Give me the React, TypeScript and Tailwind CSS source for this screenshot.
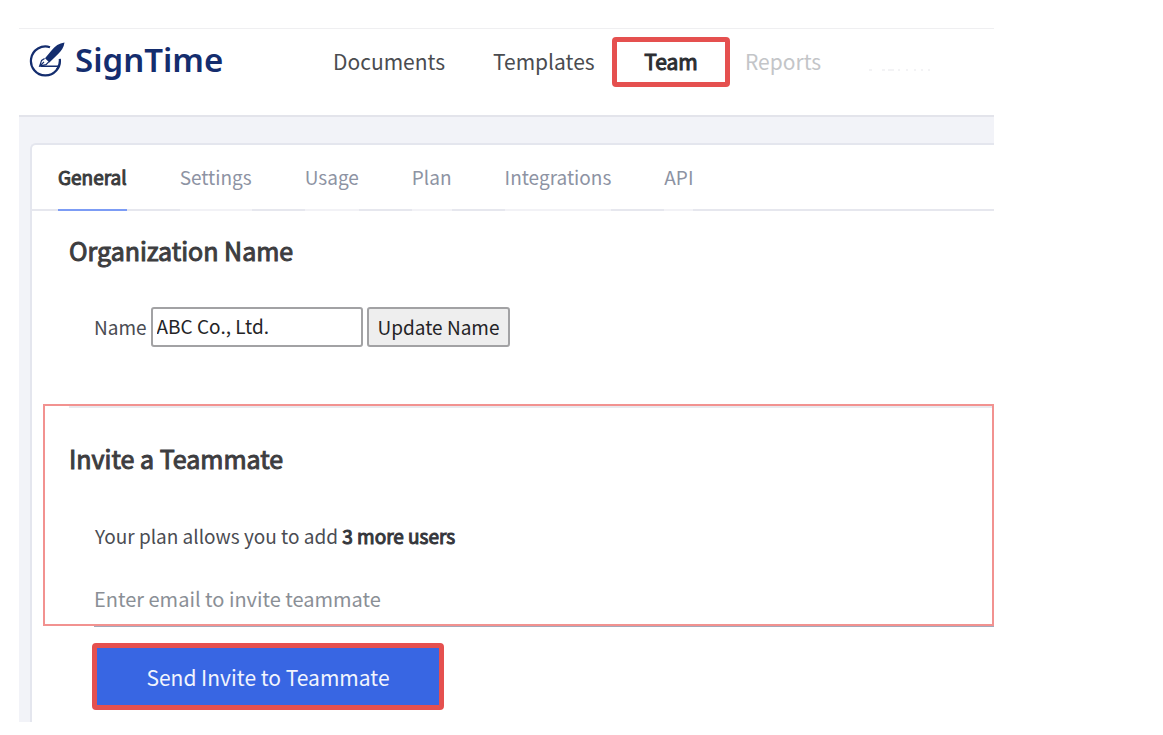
import { useState } from 'react';
import { clsx } from 'clsx';

const NAV_ITEMS = [
  { label: 'Documents', className: 'w-[160px] text-[#4a4c50]' },
  { label: 'Templates', className: 'w-[119px] text-[#4a4c50]' },
  {
    label: 'Team',
    className:
      'w-[118px] justify-center rounded-sm border-[5px] border-[#e5504f] text-[#2b2d31] [-webkit-text-stroke:1px]',
  },
  { label: 'Reports', className: 'ml-[15px] text-[#c3c5c8]' },
];

const TABS = ['General', 'Settings', 'Usage', 'Plan', 'Integrations', 'API'];

function Logo() {
  return (
    <a href="#home" className="flex items-center gap-[9px] text-[#142d6e]">
      <svg className="h-[37px] w-[37px] shrink-0" viewBox="0 0 37 37" fill="none" aria-hidden="true">
        <path
          d="M21 5.200A14.500 14.500 0 1 0 30.800 17c.3 3-.3 6-1.800 8.500"
          stroke="currentColor"
          strokeWidth="2.200"
        />
        <path d="M11.500 24.300h17.800l-2 3.500" stroke="currentColor" strokeWidth="1.400" />
        <path
          d="M35.500.5C30 1.200 26 4 22.500 8.500L16 16.200l4.400 4.200 8.200-8C32.500 8.800 34.800 5.500 35.500.5Z"
          fill="currentColor"
        />
        <path
          d="m15.600 16.600-3 1.800-2 5.800 6.400-1.600 3-3M11 24l4-4.200"
          stroke="currentColor"
          strokeWidth="1.200"
        />
      </svg>
      <span className="font-['Noto_Sans','Open_Sans',sans-serif] text-[33px] leading-9 font-semibold">
        SignTime
      </span>
    </a>
  );
}

function Header() {
  return (
    <header className="flex h-[89px] items-start border-t border-b-2 border-t-[#efeff1] border-b-[#e3e4eb] pt-2 pl-[10px]">
      <div className="flex h-[46px] w-[304px] items-center">
        <Logo />
      </div>
      <nav className="flex items-center text-[21px] leading-8">
        {NAV_ITEMS.map(({ label, className }) => (
          <a
            key={label}
            href={`#${label.toLowerCase()}`}
            className={clsx('flex h-[50px] items-center pb-[2px]', className)}
          >
            {label}
          </a>
        ))}
        <svg className="mt-4 ml-12 h-1 w-[66px]" viewBox="0 0 66 4" aria-hidden="true">
          <path
            d="M0 2h3m10 0h3m3 0h6m4 0h2m6 0h2m6 0h2m5 0h2m5 0h2"
            stroke="#f3f3f5"
            strokeWidth="2"
          />
        </svg>
      </nav>
    </header>
  );
}

export default function App() {
  const [activeTab, setActiveTab] = useState('General');
  const [name, setName] = useState('ABC Co., Ltd.');
  const [email, setEmail] = useState('');

  return (
    <div className="bg-white pt-7 pr-[169px] pb-3 pl-[19px] font-['Noto_Sans_CJK_JP','Noto_Sans',sans-serif] text-[19px] leading-7 text-[#4a4c52]">
      <Header />
      <main className="bg-[#f2f3f8] pt-[26px] pl-[11px]">
        <div className="rounded-tl-md border-t-2 border-l-2 border-[#e4e6ee] bg-white">
          <div
            role="tablist"
            className="flex gap-[53px] border-b-2 border-[#e6e7ee] pl-[26px]"
          >
            {TABS.map((tab) => (
              <button
                key={tab}
                type="button"
                role="tab"
                aria-selected={tab === activeTab}
                onClick={() => setActiveTab(tab)}
                className={clsx(
                  '-mb-[2px] h-[66px] border-b-2',
                  tab === activeTab
                    ? 'border-[#7c9cf5] text-[#3a3b3d] [-webkit-text-stroke:1px]'
                    : 'border-[#f2f2f6] text-[#8d93a3]',
                )}
              >
                {tab}
              </button>
            ))}
          </div>

          <section className="px-[37px] pt-[21px] pb-[57px]">
            <h2 className="text-[25px] leading-9 text-[#3d3d3f] [-webkit-text-stroke:1px]">
              Organization Name
            </h2>
            <form
              className="mt-[39px] flex items-center gap-1 pl-[25px]"
              onSubmit={(e) => e.preventDefault()}
            >
              <label htmlFor="org-name">Name</label>
              <input
                id="org-name"
                type="text"
                value={name}
                onChange={(e) => setName(e.target.value)}
                className="h-10 w-[212px] rounded-[3px] border-2 border-[#a2a2a4] bg-white px-1 pb-1 text-[#242426]"
              />
              <button
                type="submit"
                className="h-10 rounded-[3px] border-2 border-[#a2a2a4] bg-[#eeeeee] px-[9px] pb-px text-[#242426]"
              >
                Update Name
              </button>
            </form>
          </section>

          <form onSubmit={(e) => e.preventDefault()}>
            <section className="relative ml-[11px]">
              <div className="pointer-events-none absolute inset-x-0 top-0 bottom-px border-2 border-[#f29290]" />
              <hr className="ml-[26px] border-t-[4px] border-[#e9e9ee]" />
              <h2 className="mt-[32px] pl-[26px] text-[25px] leading-9 text-[#3d3d3f] [-webkit-text-stroke:1px]">
                Invite a Teammate
              </h2>
              <p className="mt-[46px] pl-[52px]">
                Your plan allows you to add{' '}
                <strong className="font-normal text-[#34363b] [-webkit-text-stroke:1px]">
                  3 more users
                </strong>
              </p>
              <div className="mt-7 pl-[51px]">
                <input
                  type="email"
                  aria-label="Enter email to invite teammate"
                  placeholder="Enter email to invite teammate"
                  value={email}
                  onChange={(e) => setEmail(e.target.value)}
                  className="block h-[49px] w-full border-b-2 border-[#a3a9bb] bg-transparent pb-[6px] text-[20px] placeholder:text-[#8a8f96]"
                />
              </div>
            </section>
            <div className="pt-4 pb-3 pl-[60px]">
              <button
                type="submit"
                className="h-[67px] w-[352px] rounded-sm border-[5px] border-[#e5504f] bg-[#3866e3] text-[21px] text-[#f1f4fd]"
              >
                Send Invite to Teammate
              </button>
            </div>
          </form>
        </div>
      </main>
    </div>
  );
}
